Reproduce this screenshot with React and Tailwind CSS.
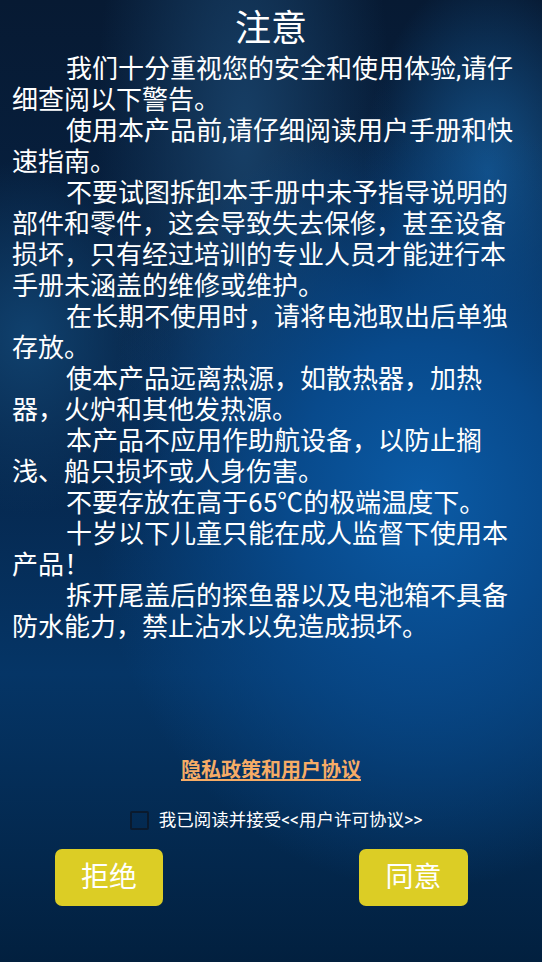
const paragraphs = [
  "我们十分重视您的安全和使用体验,请仔细查阅以下警告。",
  "使用本产品前,请仔细阅读用户手册和快速指南。",
  "不要试图拆卸本手册中未予指导说明的部件和零件，这会导致失去保修，甚至设备损坏，只有经过培训的专业人员才能进行本手册未涵盖的维修或维护。",
  "在长期不使用时，请将电池取出后单独存放。",
  "使本产品远离热源，如散热器，加热器，火炉和其他发热源。",
  "本产品不应用作助航设备，以防止搁浅、船只损坏或人身伤害。",
  "不要存放在高于65℃的极端温度下。",
  "十岁以下儿童只能在成人监督下使用本产品！",
  "拆开尾盖后的探鱼器以及电池箱不具备防水能力，禁止沾水以免造成损坏。",
];

const App = () => {
  return (
    <div className="w-[542px] h-[962px] overflow-hidden flex flex-col text-white font-['Roboto','Noto_Sans_CJK_SC',sans-serif] bg-[radial-gradient(ellipse_at_78%_52%,#0b5ba6_0%,#084a8c_22%,transparent_55%),radial-gradient(ellipse_at_45%_14%,#173f66_0%,transparent_35%),radial-gradient(ellipse_at_5%_35%,#10416e_0%,transparent_20%),radial-gradient(ellipse_at_90%_18%,#14528a_0%,transparent_18%),linear-gradient(180deg,#071a33_0%,#06254a_45%,#053566_70%,#02203f_100%)]">
      {/* Title */}
      <h1 className="pt-[8px] text-center text-[36px] leading-[42px]">注意</h1>

      {/* Warnings */}
      <div className="mt-[4px] px-[12px] text-[26px] leading-[31px]">
        {paragraphs.map((text, index) => (
          <p key={index} className="indent-[54px] break-all">
            {text}
          </p>
        ))}
      </div>

      {/* Footer */}
      <div className="mt-auto pb-[56px] flex flex-col items-center">
        <a className="text-[20px] leading-[26px] font-semibold text-[#f6ac66] underline underline-offset-2">
          隐私政策和用户协议
        </a>

        <label className="mt-[26px] pl-[10px] flex items-center gap-[10px] text-[17.5px] leading-[22px]">
          <span className="w-[19px] h-[19px] rounded-[2px] border-2 border-[#0a1a2e]" />
          <span>我已阅读并接受&lt;&lt;用户许可协议&gt;&gt;</span>
        </label>

        <div className="mt-[18px] w-full px-[55px] flex justify-between">
          <button className="w-[108px] h-[57px] rounded-[7px] bg-[#dccd25] text-[28px] text-white">
            拒绝
          </button>
          <button className="w-[109px] h-[57px] rounded-[7px] bg-[#dccd25] text-[28px] text-white mr-[19px]">
            同意
          </button>
        </div>
      </div>
    </div>
  );
};

export default App;
